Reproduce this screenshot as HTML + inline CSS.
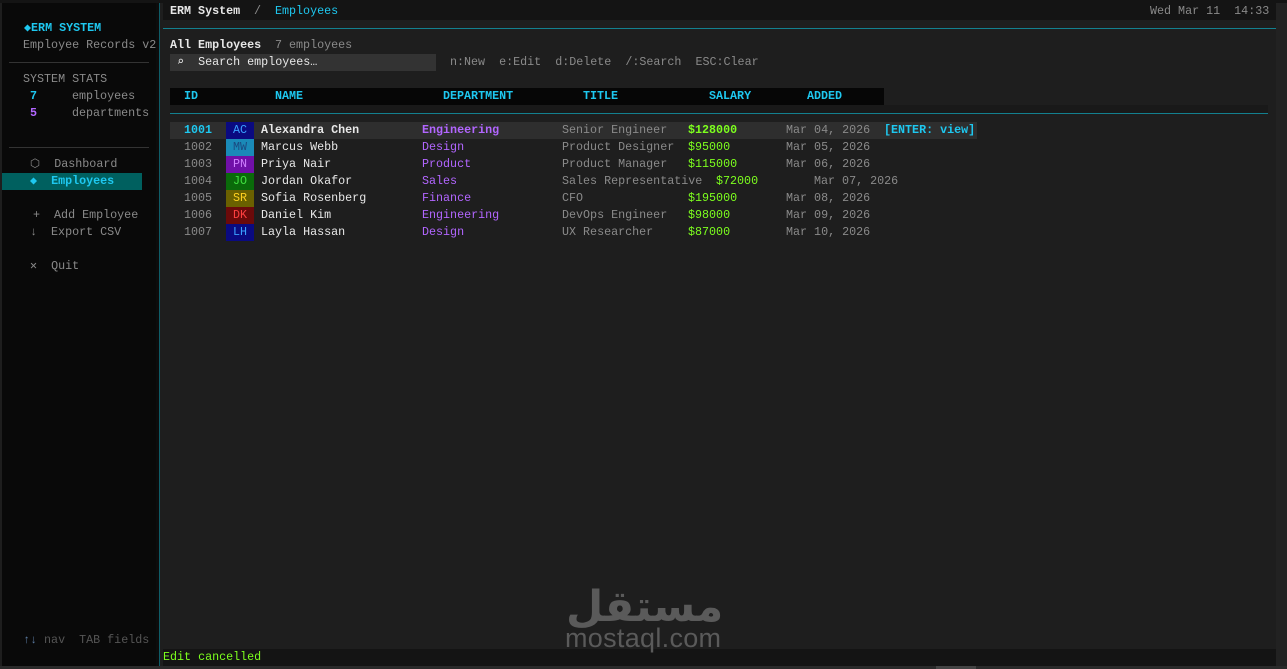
<!DOCTYPE html>
<html><head><meta charset="utf-8"><style>
*{margin:0;padding:0;box-sizing:border-box}
body{width:1287px;height:669px;background:#1e1e1e;position:relative;overflow:hidden;font-family:"Liberation Mono","DejaVu Sans Mono",monospace;font-size:11.7px;line-height:17px;color:#cfcfcf}
.a{position:absolute;white-space:pre}
.c{color:#1ec8f0}.b{font-weight:bold}.g{color:#8a8a8a}.p{color:#b266ff}.gr{color:#7dff1e}.w{color:#e8e8e8}
.av{position:absolute;width:28px;height:17px;text-align:center}
</style></head><body>
<div class="a" style="left:0;top:0;width:1287px;height:3px;background:#141414"></div>
<div class="a" style="left:2px;top:3px;width:154px;height:663px;background:#090909"></div>
<div class="a" style="left:156px;top:3px;width:3px;height:663px;background:#0c0c0c"></div>
<div class="a" style="left:159px;top:3px;width:1px;height:663px;background:#0f5d68"></div>
<div class="a" style="left:163px;top:3px;width:1113px;height:17px;background:#141414"></div>
<div class="a" style="left:163px;top:28px;width:1113px;height:1px;background:#13808f"></div>
<div class="a" style="left:1276px;top:3px;width:11px;height:663px;background:#222"></div>
<div class="a" style="left:163px;top:649px;width:1113px;height:17px;background:#141414"></div>
<div class="a" style="left:0;top:666px;width:1287px;height:3px;background:#2a2a2a"></div>
<div class="a" style="left:936px;top:666px;width:40px;height:3px;background:#444"></div>

<div class="a c b" style="left:24px;top:20px">◆ERM SYSTEM</div>
<div class="a g" style="left:23px;top:37px">Employee Records v2</div>
<div class="a" style="left:9px;top:62px;width:140px;height:1px;background:#333"></div>
<div class="a g" style="left:23px;top:71px">SYSTEM STATS</div>
<div class="a c b" style="left:30px;top:88px">7</div><div class="a g" style="left:72px;top:88px">employees</div>
<div class="a p b" style="left:30px;top:105px">5</div><div class="a g" style="left:72px;top:105px">departments</div>
<div class="a" style="left:9px;top:147px;width:140px;height:1px;background:#333"></div>
<div class="a g" style="left:30px;top:156px">⬡  Dashboard</div>
<div class="a" style="left:2px;top:173px;width:140px;height:17px;background:#00605f"></div>
<div class="a c b" style="left:30px;top:173px">◆  Employees</div>
<div class="a g" style="left:33px;top:207px">+  Add Employee</div>
<div class="a g" style="left:30px;top:224px">↓  Export CSV</div>
<div class="a g" style="left:30px;top:258px">✕  Quit</div>
<div class="a" style="left:23px;top:632px;color:#555"><span style="color:#5a7aa0">↑↓</span> nav  TAB fields</div>

<div class="a w b" style="left:170px;top:3px">ERM System</div>
<div class="a g" style="left:254px;top:3px">/</div>
<div class="a c" style="left:275px;top:3px">Employees</div>
<div class="a g" style="left:1150px;top:3px">Wed Mar 11  14:33</div>

<div class="a w b" style="left:170px;top:37px">All Employees</div>
<div class="a g" style="left:275px;top:37px">7 employees</div>
<div class="a" style="left:170px;top:54px;width:266px;height:17px;background:#333"></div>
<div class="a w" style="left:177px;top:54px">⌕  Search employees…</div>
<div class="a g" style="left:450px;top:54px">n:New  e:Edit  d:Delete  /:Search  ESC:Clear</div>

<div class="a" style="left:170px;top:88px;width:714px;height:17px;background:#060606"></div>
<div class="a c b" style="left:184px;top:88px">ID</div>
<div class="a c b" style="left:275px;top:88px">NAME</div>
<div class="a c b" style="left:443px;top:88px">DEPARTMENT</div>
<div class="a c b" style="left:583px;top:88px">TITLE</div>
<div class="a c b" style="left:709px;top:88px">SALARY</div>
<div class="a c b" style="left:807px;top:88px">ADDED</div>
<div class="a" style="left:170px;top:105px;width:1098px;height:9px;background:#191919"></div>
<div class="a" style="left:170px;top:113px;width:1098px;height:1px;background:#13808f"></div>

<div class="a" style="left:170px;top:122px;width:807px;height:17px;background:#2e2e2e"></div>
<div class="a c b" style="left:184px;top:122px">1001</div>
<div class="av" style="left:226px;top:122px;background:#0a0a80;color:#3aa0ff">AC</div>
<div class="a w b" style="left:261px;top:122px">Alexandra Chen</div>
<div class="a p b" style="left:422px;top:122px">Engineering</div>
<div class="a g" style="left:562px;top:122px">Senior Engineer</div>
<div class="a gr b" style="left:688px;top:122px">$128000</div>
<div class="a g" style="left:786px;top:122px">Mar 04, 2026</div>
<div class="a c b" style="left:884px;top:122px">[ENTER: view]</div>

<div class="a g" style="left:184px;top:139px">1002</div>
<div class="av" style="left:226px;top:139px;background:#1a8ab8;color:#1a4a80">MW</div>
<div class="a w" style="left:261px;top:139px">Marcus Webb</div>
<div class="a p" style="left:422px;top:139px">Design</div>
<div class="a g" style="left:562px;top:139px">Product Designer</div>
<div class="a gr" style="left:688px;top:139px">$95000</div>
<div class="a g" style="left:786px;top:139px">Mar 05, 2026</div>

<div class="a g" style="left:184px;top:156px">1003</div>
<div class="av" style="left:226px;top:156px;background:#7010a8;color:#d080ff">PN</div>
<div class="a w" style="left:261px;top:156px">Priya Nair</div>
<div class="a p" style="left:422px;top:156px">Product</div>
<div class="a g" style="left:562px;top:156px">Product Manager</div>
<div class="a gr" style="left:688px;top:156px">$115000</div>
<div class="a g" style="left:786px;top:156px">Mar 06, 2026</div>

<div class="a g" style="left:184px;top:173px">1004</div>
<div class="av" style="left:226px;top:173px;background:#0a6a0a;color:#40e040">JO</div>
<div class="a w" style="left:261px;top:173px">Jordan Okafor</div>
<div class="a p" style="left:422px;top:173px">Sales</div>
<div class="a g" style="left:562px;top:173px">Sales Representative</div>
<div class="a gr" style="left:716px;top:173px">$72000</div>
<div class="a g" style="left:814px;top:173px">Mar 07, 2026</div>

<div class="a g" style="left:184px;top:190px">1005</div>
<div class="av" style="left:226px;top:190px;background:#6a6000;color:#ffd020">SR</div>
<div class="a w" style="left:261px;top:190px">Sofia Rosenberg</div>
<div class="a p" style="left:422px;top:190px">Finance</div>
<div class="a g" style="left:562px;top:190px">CFO</div>
<div class="a gr" style="left:688px;top:190px">$195000</div>
<div class="a g" style="left:786px;top:190px">Mar 08, 2026</div>

<div class="a g" style="left:184px;top:207px">1006</div>
<div class="av" style="left:226px;top:207px;background:#6a0a0a;color:#ff4040">DK</div>
<div class="a w" style="left:261px;top:207px">Daniel Kim</div>
<div class="a p" style="left:422px;top:207px">Engineering</div>
<div class="a g" style="left:562px;top:207px">DevOps Engineer</div>
<div class="a gr" style="left:688px;top:207px">$98000</div>
<div class="a g" style="left:786px;top:207px">Mar 09, 2026</div>

<div class="a g" style="left:184px;top:224px">1007</div>
<div class="av" style="left:226px;top:224px;background:#0a0a80;color:#3aa0ff">LH</div>
<div class="a w" style="left:261px;top:224px">Layla Hassan</div>
<div class="a p" style="left:422px;top:224px">Design</div>
<div class="a g" style="left:562px;top:224px">UX Researcher</div>
<div class="a gr" style="left:688px;top:224px">$87000</div>
<div class="a g" style="left:786px;top:224px">Mar 10, 2026</div>

<div class="a" style="left:566px;top:584px;font-family:'DejaVu Sans',sans-serif;font-weight:bold;font-size:43px;line-height:46px;color:#5a5a5a">مستقل</div>
<div class="a" style="left:565px;top:624px;font-family:'Liberation Sans',sans-serif;font-size:27px;line-height:28px;color:#5a5a5a;letter-spacing:0.3px">mostaql.com</div>

<div class="a gr" style="left:163px;top:649px">Edit cancelled</div>
</body></html>
